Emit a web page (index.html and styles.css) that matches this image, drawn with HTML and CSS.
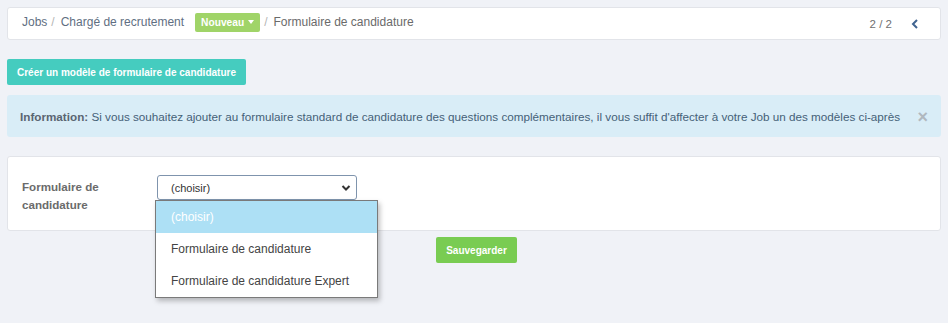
FILE: index.html
```html
<!DOCTYPE html>
<html lang="fr">
<head>
    <meta charset="UTF-8">
    <meta name="viewport" content="width=device-width, initial-scale=1.0">
    <title>Formulaire de candidature</title>
    <link rel="stylesheet" href="styles.css">
</head>
<body>

    <div class="topbar">
        <div class="crumbs">
            <a class="crumb" href="#">Jobs</a>
            <span class="sep">/</span>
            <a class="crumb" href="#">Chargé de recrutement</a>
            <span class="badge">Nouveau <span class="caret"></span></span>
            <span class="sep">/</span>
            <span class="crumb-active">Formulaire de candidature</span>
        </div>
        <div class="pager">
            <span class="count">2 / 2</span>
            <svg class="prev" width="10" height="12" viewBox="0 0 10 12">
                <path d="M7 2 L3 6 L7 10" fill="none" stroke="#3f6390" stroke-width="2"/>
            </svg>
        </div>
    </div>

    <button type="button" class="btn btn-create">Créer un modèle de formulaire de candidature</button>

    <div class="alert">
        <p><b>Information:</b> Si vous souhaitez ajouter au formulaire standard de candidature des questions complémentaires, il vous suffit d'affecter à votre Job un des modèles ci-après</p>
        <span class="close">&times;</span>
    </div>

    <form class="card">
        <label class="field-label">Formulaire de candidature</label>
        <div class="select-wrap">
            <div class="select">
                <span>(choisir)</span>
                <svg width="10" height="8" viewBox="0 0 10 8">
                    <path d="M1.5 2 L5 5.5 L8.5 2" fill="none" stroke="#333" stroke-width="2"/>
                </svg>
            </div>
            <ul class="options">
                <li class="selected">(choisir)</li>
                <li>Formulaire de candidature</li>
                <li>Formulaire de candidature Expert</li>
            </ul>
        </div>
    </form>

    <div class="actions">
        <button type="button" class="btn btn-save">Sauvegarder</button>
    </div>

</body>
</html>
```

FILE: styles.css
```css
html {
    height: 100%;
}

body {
    box-sizing: border-box;
    min-height: 100%;
    margin: 0;
    padding: 7px;
    background: #f0f2f7;
    font-family: "Liberation Sans", Arial, sans-serif;
    font-size: 12px;
    color: #666;
}

.topbar {
    height: 31px;
    display: flex;
    align-items: center;
    justify-content: space-between;
    padding: 0 14px;
    background: #fff;
    border: 1px solid #e2e4e9;
    border-radius: 3px;
}

.crumbs {
    display: flex;
    align-items: center;
    margin-top: -3px;
}

.crumb {
    color: #5f6f82;
    text-decoration: none;
}

.sep {
    color: #b5b5b5;
    margin: 0 6px 0 4px;
}

.crumb-active {
    color: #6a6a6a;
}

.badge {
    display: inline-flex;
    align-items: center;
    height: 19px;
    margin-left: 11px;
    padding: 0 6px;
    background: #a0d468;
    border-radius: 2px;
    color: #fff;
    font-weight: bold;
    font-size: 10.2px;
}

.caret {
    display: inline-block;
    margin-left: 4px;
    border-left: 3.5px solid transparent;
    border-right: 3.5px solid transparent;
    border-top: 4px solid #fff;
}

.pager {
    display: flex;
    align-items: center;
    gap: 18px;
    margin-right: 6px;
}

.count {
    color: #707070;
    font-size: 11.5px;
}

.btn {
    border: none;
    border-radius: 2px;
    color: #fff;
    font-family: inherit;
    font-weight: bold;
    font-size: 10px;
    cursor: pointer;
}

.btn-create {
    display: block;
    height: 26px;
    margin-top: 19px;
    padding: 0 10px;
    background: #45ccbf;
}

.alert {
    display: flex;
    align-items: center;
    justify-content: space-between;
    height: 42px;
    margin-top: 10px;
    padding: 0 13px;
    background: #d9edf7;
    border-radius: 3px;
    color: #456178;
    font-size: 11.7px;
}

.alert p {
    margin: 0;
    white-space: nowrap;
}

.alert b {
    color: #5a6572;
}

.close {
    color: #b0b8bf;
    font-size: 18px;
    font-weight: bold;
    margin-top: 2px;
}

.card {
    display: flex;
    align-items: flex-start;
    height: 55px;
    margin: 19px 0 0;
    padding: 18px 14px 0;
    background: #fff;
    border: 1px solid #e2e4e9;
    border-radius: 3px;
}

.field-label {
    width: 135px;
    padding-top: 3px;
    font-weight: bold;
    font-size: 11.6px;
    line-height: 18px;
    color: #6b6b6b;
}

.select-wrap {
    position: relative;
}

.select {
    box-sizing: border-box;
    width: 200px;
    height: 25px;
    display: flex;
    align-items: center;
    justify-content: space-between;
    padding: 0 5px 0 13px;
    border: 1px solid #7f94ad;
    border-radius: 3px;
    background: #fff;
    color: #333;
    font-size: 11px;
}

.options {
    position: absolute;
    left: -2px;
    top: 25px;
    width: 221px;
    margin: 0;
    padding: 0;
    list-style: none;
    background: #fff;
    border: 1px solid #7a7a7a;
    box-shadow: 2px 3px 5px rgba(0, 0, 0, 0.25);
    z-index: 2;
}

.options li {
    height: 32px;
    line-height: 32px;
    padding-left: 15px;
    color: #444;
    font-size: 12px;
}

.options li.selected {
    background: #ade0f5;
    color: #fff;
}

.actions {
    text-align: center;
    margin-top: 6px;
}

.btn-save {
    height: 26px;
    padding: 0 10px;
    margin-left: 5px;
    background: #79cc52;
}
```
